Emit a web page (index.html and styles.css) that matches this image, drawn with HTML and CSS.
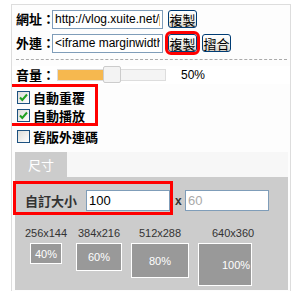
FILE: index.html
```html
<!DOCTYPE html>
<html lang="zh-Hant">
<head>
    <meta charset="UTF-8">
    <title>分享</title>
    <link rel="stylesheet" href="styles.css">
</head>
<body>
    <div class="panel">
        <div class="row first">
            <span class="lbl">網址：</span>
            <input class="txt" type="text" value="http://vlog.xuite.net/play/RHdTYWx5LTI2MjY1.flv">
            <button class="btn">複製</button>
        </div>
        <div class="row">
            <span class="lbl">外連：</span>
            <input class="txt" type="text" value="<iframe marginwidth=&quot;0&quot; marginheight=&quot;0&quot;">
            <button class="btn marked">複製</button>
            <button class="btn">摺合</button>
        </div>

        <div class="dash"></div>

        <div class="vol">
            <span class="lbl">音量：</span>
            <div class="slider">
                <div class="fill"></div>
                <div class="thumb"></div>
            </div>
            <span class="pct">50%</span>
        </div>

        <div class="checks">
            <div class="chk"><span class="box on"><svg viewBox="0 0 11 11" width="11" height="11"><path d="M2 5.5 L4.3 8 L9 2.5" fill="none" stroke="#21a121" stroke-width="2"/></svg></span>自動重覆</div>
            <div class="chk"><span class="box on"><svg viewBox="0 0 11 11" width="11" height="11"><path d="M2 5.5 L4.3 8 L9 2.5" fill="none" stroke="#21a121" stroke-width="2"/></svg></span>自動播放</div>
        </div>
        <div class="chk single"><span class="box"></span>舊版外連碼</div>

        <div class="tabs">
            <span class="tab">尺寸</span>
        </div>
        <div class="tabbody">
            <div class="custom">
                <span class="clbl">自訂大小</span>
                <input class="size" type="text" value="100">
                <span class="by">x</span>
                <input class="size" type="text" placeholder="60">
            </div>
            <div class="sizes">
                <div class="opt o1"><div class="dim">256x144</div><div class="sq">40%</div></div>
                <div class="opt o2"><div class="dim">384x216</div><div class="sq">60%</div></div>
                <div class="opt o3"><div class="dim">512x288</div><div class="sq">80%</div></div>
                <div class="opt o4"><div class="dim">640x360</div><div class="sq">100%</div></div>
            </div>
        </div>
    </div>
</body>
</html>
```

FILE: styles.css
```css
body {
    margin: 0;
    height: 291px;
    overflow: hidden;
    background: #fff;
    font-family: "Liberation Sans", Arial, "Noto Sans CJK TC", sans-serif;
    font-size: 13px;
    color: #000;
}

.panel {
    margin: 4px 0 0 11px;
    width: 278px;
    height: 287px;
    overflow: hidden;
    border: 1px solid #ddd;
    border-bottom: none;
    background: #fdfdfd;
}

.row {
    display: flex;
    align-items: center;
    height: 22px;
    padding-left: 4px;
    margin-top: 2px;
}

.row.first {
    margin-top: 3px;
}

.lbl {
    width: 36px;
    flex: none;
    font-family: "Noto Sans CJK TC", sans-serif;
    font-weight: bold;
    font-size: 13px;
    line-height: 16px;
    white-space: nowrap;
}

.txt {
    box-sizing: border-box;
    width: 111px;
    height: 19px;
    padding: 0 2px;
    margin: 0;
    border: 1px solid #7f9db9;
    background: #fff;
    font: 12px "Liberation Sans", Arial, sans-serif;
    color: #000;
}

.btn {
    box-sizing: border-box;
    width: 29px;
    height: 18px;
    margin: 0 0 0 5px;
    padding: 0;
    border: 1px solid #003c74;
    border-radius: 3px;
    background: linear-gradient(#ffffff, #f0f0ea 60%, #d6d0c5);
    font-family: "Noto Sans CJK TC", sans-serif;
    font-size: 13px;
    line-height: 15px;
    color: #000;
}

.btn.marked {
    outline: 3px solid #f00;
    outline-offset: 0;
}

.dash {
    margin: 5px 3px 0 4px;
    border-top: 1px dashed #aaa;
}

.vol {
    display: flex;
    align-items: center;
    height: 18px;
    margin-top: 6px;
    padding-left: 4px;
    background: #fff;
}

.slider {
    position: relative;
    flex: none;
    box-sizing: border-box;
    width: 109px;
    height: 12px;
    margin-left: 5px;
    border: 1px solid #ddd;
    background: #f4f4f4;
}

.fill {
    width: 46px;
    height: 10px;
    background: #f6b84f;
}

.thumb {
    position: absolute;
    left: 45px;
    top: -4px;
    box-sizing: border-box;
    width: 18px;
    height: 17px;
    border: 1px solid #ccc;
    border-radius: 2px;
    background: #f3f3f3;
}

.pct {
    margin-left: 15px;
    font-size: 12px;
}

.checks {
    position: relative;
    margin-top: 4px;
}

.checks::after {
    content: "";
    position: absolute;
    left: -7px;
    top: -4px;
    width: 93px;
    height: 42px;
    box-sizing: border-box;
    border: 3px solid #f00;
}

.chk {
    display: flex;
    align-items: center;
    height: 18px;
    padding-left: 5px;
    font-family: "Noto Sans CJK TC", sans-serif;
    font-weight: bold;
    font-size: 13px;
}

.chk.single {
    margin-top: 3px;
}

.box {
    box-sizing: border-box;
    width: 13px;
    height: 13px;
    margin-right: 3px;
    border: 1px solid #1c5180;
    background: linear-gradient(135deg, #dcdcd7, #ffffff);
    display: flex;
    align-items: center;
    justify-content: center;
}

.tabs {
    display: flex;
    height: 25px;
    margin: 7px 2px 0 3px;
    background: #f7f7f7;
}

.tab {
    width: 52px;
    line-height: 25px;
    text-align: center;
    background: #ccc;
    color: #fff;
    font-family: "Noto Sans CJK TC", sans-serif;
    font-size: 13px;
}

.tabbody {
    margin: 0 2px 0 3px;
    height: 100px;
    padding: 13px 0 0 10px;
    background: #ccc;
}

.custom {
    position: relative;
    display: flex;
    align-items: center;
    height: 21px;
}

.custom::after {
    content: "";
    position: absolute;
    left: -12px;
    top: -9px;
    width: 160px;
    height: 34px;
    box-sizing: border-box;
    border: 3px solid #f00;
}

.clbl {
    width: 61px;
    flex: none;
    font-family: "Noto Sans CJK TC", sans-serif;
    font-weight: bold;
    font-size: 13px;
    color: #333;
}

.size {
    box-sizing: border-box;
    width: 84px;
    height: 21px;
    margin: 0;
    padding: 0 2px;
    border: 1px solid #7f9db9;
    background: #fff;
    font: 13px "Liberation Sans", Arial, sans-serif;
    color: #000;
}

.size::placeholder {
    color: #aaa;
}

.by {
    width: 6px;
    margin: 0 4px 0 5px;
    font-weight: bold;
    font-size: 12px;
    color: #333;
}

.sizes {
    display: flex;
    align-items: flex-start;
    margin: 16px 0 0 -1px;
}

.opt {
    display: flex;
    flex-direction: column;
    align-items: center;
    flex: none;
}

.o1 { width: 44px; }
.o2 { width: 62px; }
.o3 { width: 60px; }
.o4 { width: 84px; align-items: flex-start; }

.dim {
    font-size: 11px;
    line-height: 13px;
    color: #333;
}

.o4 .dim {
    margin-left: 22px;
}

.sq {
    box-sizing: border-box;
    margin-top: 3px;
    display: flex;
    align-items: center;
    justify-content: center;
    border: 1px solid #fff;
    background: #999;
    color: #fff;
    font-size: 11px;
}

.o1 .sq { width: 32px; height: 21px; }
.o2 .sq { width: 46px; height: 28px; }
.o3 .sq { width: 58px; height: 35px; }
.o4 .sq {
    width: 54px;
    height: 43px;
    margin-left: 8px;
    justify-content: flex-start;
    padding-left: 23px;
}
```
